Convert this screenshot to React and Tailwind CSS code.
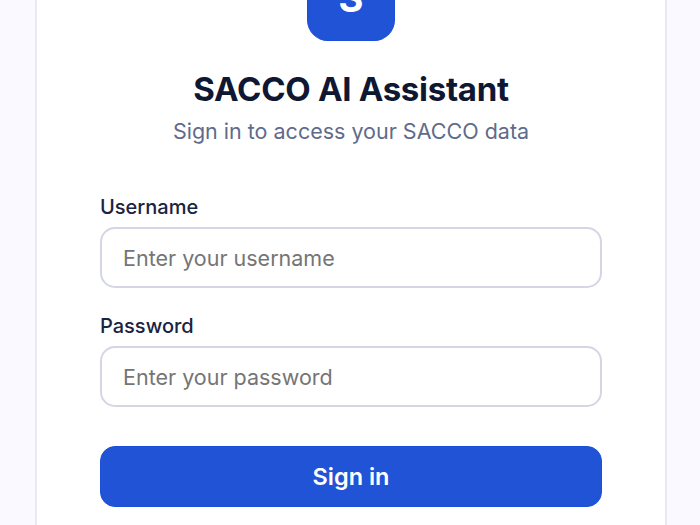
import React from 'react';

const App = () => {
  return (
    <div className="h-[525px] w-[700px] overflow-hidden bg-[#f9f9ff] font-['Inter',sans-serif]">
      <div className="ml-[35px] h-[525px] w-[632px] border-x-2 border-[#e8e8f6] bg-white px-[63px]">
        <div className="flex flex-col items-center">
          {/* logo is cut off by the top of the window */}
          <div className="flex h-[41px] w-[88px] items-end justify-center overflow-hidden rounded-b-[21px] border-x border-b border-[#1a4fd8] bg-[#2053d6] pb-[19px]">
            <span className="text-[38px] leading-[46px] font-bold text-white">S</span>
          </div>
          <h1 className="mt-[27px] text-[33px] leading-[42px] font-bold tracking-[-0.3px] text-[#0f1733]">SACCO AI Assistant</h1>
          <p className="mt-[7px] text-[21.5px] leading-[28px] text-[#5f6b8a]">Sign in to access your SACCO data</p>
        </div>
        <form className="mt-[49px] flex flex-col">
          <label className="text-[20px] leading-[26px] font-medium text-[#1a2340]">Username</label>
          <input
            placeholder="Enter your username"
            className="mt-[7px] h-[61px] w-full rounded-[15px] border-2 border-[#d4d6e4] bg-white px-[21px] text-[21.5px] placeholder:text-[#757575]"
          />
          <label className="mt-[25px] text-[20px] leading-[26px] font-medium text-[#1a2340]">Password</label>
          <input
            placeholder="Enter your password"
            className="mt-[7px] h-[61px] w-full rounded-[15px] border-2 border-[#d4d6e4] bg-white px-[21px] text-[21.5px] placeholder:text-[#757575]"
          />
          <button
            type="button"
            className="mt-[39px] h-[61px] w-full rounded-[15px] border border-[#1a4fd8] bg-[#2053d6] text-[23.5px] font-semibold text-white"
          >
            Sign in
          </button>
        </form>
      </div>
    </div>
  );
};

export default App;
